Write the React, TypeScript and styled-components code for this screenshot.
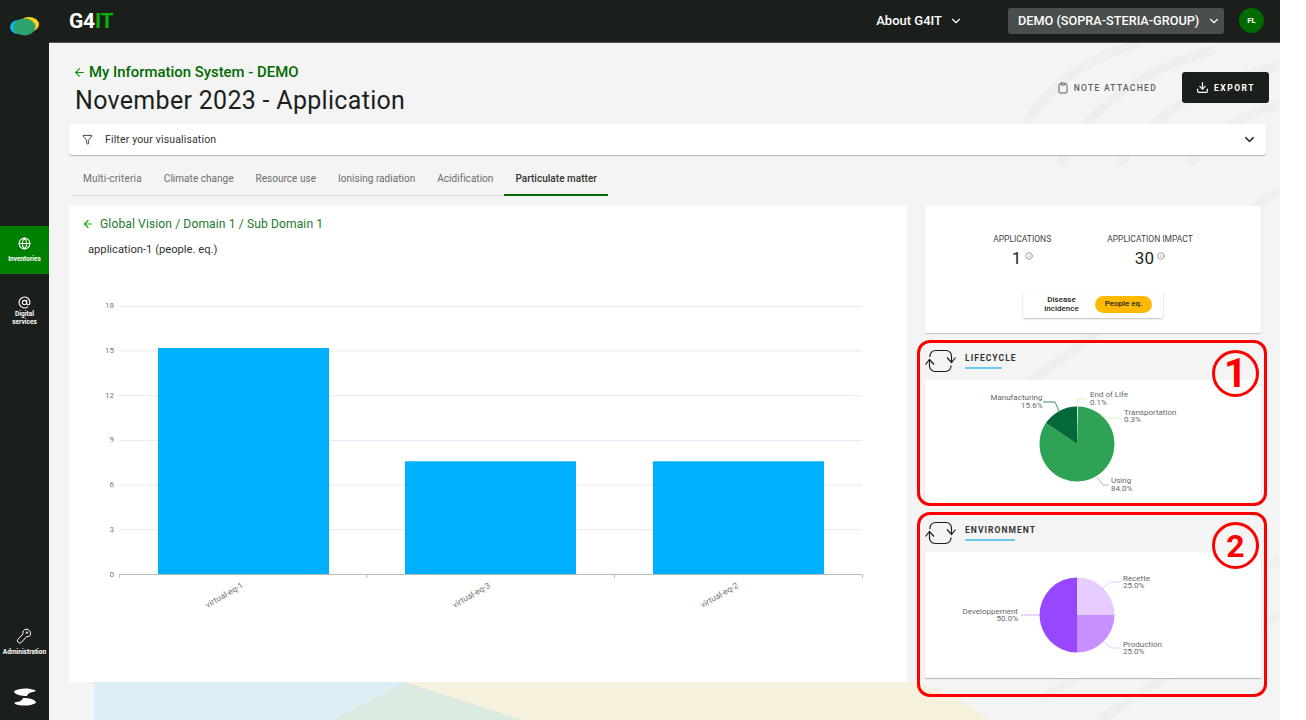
import React from "react";
import styled, { createGlobalStyle } from "styled-components";
import { ArrowLeft, AtSign, ChevronDown, Clipboard, Download, Filter, Globe, Info } from "lucide-react";

const FONT = `Roboto, "Liberation Sans", sans-serif`;

const GlobalStyle = createGlobalStyle`
  html, body {
    margin: 0;
    padding: 0;
    background: #ffffff;
    overflow: hidden;
  }
  * {
    box-sizing: border-box;
  }
  body {
    font-family: ${FONT};
  }
`;

const Screen = styled.div`
  display: flex;
  width: 1280px;
  height: 720px;
  background: #1b1f1c;
  overflow: hidden;
`;

const Sidebar = styled.nav`
  display: flex;
  flex-direction: column;
  flex: 0 0 49px;
  color: #ffffff;
`;

const SideLogo = styled.div`
  display: flex;
  align-items: center;
  justify-content: center;
  height: 52px;
  margin-bottom: 174px;
`;

const SideItem = styled.div<{ $active?: boolean }>`
  display: flex;
  flex-direction: column;
  align-items: center;
  justify-content: center;
  gap: ${(p) => (p.$active ? "5px" : "1px")};
  height: 48px;
  margin-top: ${(p) => (p.$active ? "0" : "13px")};
  background: ${(p) => (p.$active ? "#008000" : "transparent")};
  font-size: 6.5px;
  line-height: 8px;
  font-weight: 700;
  text-align: center;
`;

const SideBottom = styled.div`
  display: flex;
  flex-direction: column;
  align-items: center;
  gap: 32px;
  margin-top: auto;
  padding-bottom: 14px;
`;

const SideTool = styled.div`
  display: flex;
  flex-direction: column;
  align-items: center;
  gap: 4px;
  font-size: 6.5px;
  font-weight: 700;
`;

const Main = styled.div`
  display: flex;
  flex-direction: column;
  flex: 1;
  min-width: 0;
`;

const TopBar = styled.header`
  display: flex;
  align-items: center;
  flex: 0 0 43px;
  padding: 0 16px 1px 20px;
  color: #ffffff;
  border-bottom: 1px solid #555;
`;

const Brand = styled.div`
  font-size: 21px;
  font-weight: 700;
  letter-spacing: -0.2px;
  margin-right: auto;

  span {
    color: #0bb00b;
  }
`;

const AboutMenu = styled.div`
  display: flex;
  align-items: center;
  gap: 7px;
  font-size: 13px;
  font-weight: 500;
  margin-right: 45px;
`;

const OrgSelect = styled.div`
  display: flex;
  align-items: center;
  justify-content: space-between;
  width: 216px;
  height: 26px;
  padding: 0 3px 0 10px;
  background: #4a4e4c;
  border-radius: 3px;
  font-size: 12.7px;
  font-weight: 500;
  margin-right: 15px;
  white-space: nowrap;

  svg {
    flex-shrink: 0;
  }
`;

const Avatar = styled.div`
  display: flex;
  align-items: center;
  justify-content: center;
  width: 25px;
  height: 25px;
  border-radius: 50%;
  background: #006b00;
  font-size: 8px;
  font-weight: 700;
`;

const Content = styled.main`
  position: relative;
  flex: 1;
  padding: 20px 11px 0 20px;
  background: #f4f4f4;
  overflow: hidden;
`;

const Backdrop = styled.svg`
  position: absolute;
  top: 0;
  left: 0;
`;

const Layer = styled.div`
  position: relative;
`;

const TitleRow = styled.div`
  display: flex;
  justify-content: space-between;
  height: 61px;
`;

const BackLink = styled.div`
  display: flex;
  align-items: center;
  gap: 3px;
  height: 18px;
  padding-left: 4px;
  color: #006b00;
  font-size: 14.9px;
  font-weight: 500;

  svg {
    color: #0a8f0a;
  }
`;

const PageTitle = styled.h1`
  margin: 6px 0 0 6px;
  color: #1b1f1c;
  font-size: 25px;
  line-height: 28px;
  font-weight: 400;
  letter-spacing: 0.3px;
`;

const Actions = styled.div`
  display: flex;
  align-items: center;
  height: 31px;
  margin-top: 9px;
`;

const NoteLink = styled.div`
  display: flex;
  align-items: center;
  gap: 5px;
  margin-right: 25px;
  color: #5c5f5d;
  font-size: 8.5px;
  font-weight: 500;
  letter-spacing: 1.3px;
`;

const ExportButton = styled.button`
  display: flex;
  align-items: center;
  justify-content: center;
  gap: 5px;
  width: 87px;
  height: 31px;
  border: 0;
  border-radius: 3px;
  background: #1b1f1c;
  color: #ffffff;
  font-family: ${FONT};
  font-size: 8.5px;
  font-weight: 700;
  letter-spacing: 1.5px;
`;

const FilterBar = styled.div`
  display: flex;
  align-items: center;
  height: 31px;
  margin-right: 3px;
  padding: 0 9px 1px 13px;
  background: #ffffff;
  border-radius: 3px;
  box-shadow: 0 1px 1px 0 #b5b5b5;
  color: #333;
  font-size: 10.5px;

  span {
    margin: 0 auto 0 12px;
    letter-spacing: 0.15px;
  }
`;

const Tabs = styled.div`
  display: flex;
  width: 533px;
  height: 36px;
  margin: 5px 0 10px 3px;
  border-bottom: 1px solid #ddd;
`;

const Tab = styled.div<{ $active?: boolean }>`
  display: flex;
  align-items: center;
  justify-content: center;
  padding: 2px 11px 0;
  margin-bottom: ${(p) => (p.$active ? "-1px" : "0")};
  border-bottom: ${(p) => (p.$active ? "2px solid #006b00" : "0")};
  color: ${(p) => (p.$active ? "#333" : "#6b6e6c")};
  font-size: 10px;
  letter-spacing: 0.03px;
  font-weight: ${(p) => (p.$active ? 500 : 400)};
  white-space: nowrap;

  &:first-child {
    letter-spacing: 0.2px;
  }
`;

const Dashboard = styled.div`
  display: flex;
  gap: 18px;
`;

const ChartCard = styled.section`
  display: flex;
  flex-direction: column;
  flex: 0 0 838px;
  height: 476px;
  background: #ffffff;
`;

const Crumb = styled.div`
  display: flex;
  align-items: center;
  gap: 6px;
  height: 16px;
  margin: 10px 0 0 13px;
  color: #217a2e;
  font-size: 12.1px;
  letter-spacing: 0.1px;

  svg {
    color: #0cb40c;
  }
`;

const ChartTitle = styled.div`
  height: 16px;
  margin: 10px 0 12px 19px;
  color: #333;
  font-size: 11.2px;
  line-height: 16px;
`;

const SideColumn = styled.div`
  display: flex;
  flex-direction: column;
  flex: 0 0 336px;
`;

const StatCard = styled.section`
  display: flex;
  flex-direction: column;
  align-items: center;
  height: 127px;
  padding-top: 27px;
  background: #ffffff;
  border-radius: 2px;
  box-shadow: 0 1px 1px #c4c4c4;
`;

const Stats = styled.div`
  display: flex;
  justify-content: center;
  gap: 56px;
  width: 100%;
`;

const Stat = styled.div`
  display: flex;
  flex-direction: column;
  align-items: center;
  color: #444;
  font-size: 8.5px;
  line-height: 12px;
`;

const StatValue = styled.div`
  display: flex;
  align-items: flex-start;
  gap: 3px;
  margin-top: 6px;
  color: #222;
  font-size: 17px;
  line-height: 15px;
  letter-spacing: 0.3px;

  svg {
    color: #777;
    margin-top: 1px;
  }
`;

const UnitToggle = styled.div`
  display: flex;
  align-items: center;
  gap: 10px;
  width: 140px;
  height: 28px;
  margin-top: 24px;
  padding: 0 11px 0 15px;
  background: #ffffff;
  border-radius: 2px;
  box-shadow: 0 1px 2px #bdbdbd;
  color: #222;
  font-size: 8px;
  line-height: 9.5px;
  font-weight: 500;
  text-align: center;
`;

const UnitName = styled.div`
  flex: 0 0 47px;
`;

const UnitPill = styled.div`
  display: flex;
  align-items: center;
  justify-content: center;
  flex: 1;
  height: 17px;
  border-radius: 9px;
  background: #ffb900;
`;

const Callout = styled.section<{ $top: number }>`
  position: relative;
  margin-top: ${(p) => p.$top}px;
`;

const CalloutFrame = styled.div<{ $bottom: number }>`
  position: absolute;
  top: -6px;
  left: -8px;
  right: -6px;
  bottom: ${(p) => p.$bottom}px;
  border: 3px solid #ff0000;
  border-radius: 13px;
  pointer-events: none;
`;

const CalloutNumber = styled.div<{ $size: number }>`
  position: absolute;
  top: 4px;
  right: 2px;
  display: flex;
  align-items: center;
  justify-content: center;
  width: 47px;
  height: 47px;
  border: 3px solid #ff0000;
  border-radius: 50%;
  color: #ff0000;
  font-size: ${(p) => p.$size}px;
  line-height: 1;
  font-weight: 700;
`;

const SectionHead = styled.div`
  display: flex;
  align-items: flex-start;
  gap: 9px;
  height: 34px;
  padding: 3px 0 0;
`;

const SectionTitle = styled.div<{ $rule: number }>`
  margin-top: 5px;
  color: #333;
  font-size: 8.5px;
  line-height: 9px;
  font-weight: 700;
  letter-spacing: 1.05px;

  &::after {
    content: "";
    display: block;
    width: ${(p) => p.$rule}px;
    height: 2px;
    margin-top: 4px;
    background: #6cc9ef;
  }
`;

const PieCard = styled.div<{ $height: number }>`
  height: ${(p) => p.$height}px;
  background: #ffffff;
  border-radius: 2px;
  box-shadow: 0 1px 1px #b5b5b5;

  svg {
    display: block;
  }
`;

const ChartText = styled.text<{ $size: number }>`
  font-family: ${FONT};
  font-size: ${(p) => p.$size}px;
  fill: #777;
`;

const PieText = styled.text`
  font-family: ${FONT};
  font-size: 8px;
  fill: #666;
`;

const yTicks = [0, 3, 6, 9, 12, 15, 18];
const bars = [
  { label: "virtual-eq-1", x: 158, value: 15.2, tx: 244, ty: 587 },
  { label: "virtual-eq-3", x: 405, value: 7.6, tx: 491, ty: 587 },
  { label: "virtual-eq-2", x: 653, value: 7.6, tx: 739, ty: 587 },
];

function BarChart() {
  const y = (v: number) => 574.5 - v * 14.9;
  return (
    <svg width={838} height={412} viewBox="69 270 838 412">
      {yTicks.slice(1).map((t) => (
        <line key={t} x1={119} x2={862} y1={y(t)} y2={y(t)} stroke="#e6e9f2" />
      ))}
      {yTicks.map((t) => (
        <ChartText key={t} $size={8} x={114} y={y(t) + 2} textAnchor="end">
          {t}
        </ChartText>
      ))}
      {bars.map((b) => (
        <rect key={b.x} x={b.x} y={y(b.value)} width={171} height={b.value * 14.9} fill="#00b0ff" />
      ))}
      <path d="M119.5 578V574.5H862.5V578M367 574.5V578M614.5 574.5V578" fill="none" stroke="#bbb" />
      {bars.map((b) => (
        <ChartText key={b.label} $size={8.5} x={b.tx} y={b.ty} textAnchor="end" transform={`rotate(-30 ${b.tx} ${b.ty})`}>
          {b.label}
        </ChartText>
      ))}
    </svg>
  );
}

type Slice = { from: number; to: number; color: string };

// fractions run clockwise from the top of the pie
function slicePath(cx: number, cy: number, r: number, from: number, to: number) {
  const pt = (f: number) => {
    const a = f * 2 * Math.PI;
    return `${cx + r * Math.sin(a)} ${cy - r * Math.cos(a)}`;
  };
  return `M${cx} ${cy}L${pt(from)}A${r} ${r} 0 ${to - from > 0.5 ? 1 : 0} 1 ${pt(to)}Z`;
}

function Pie({ cy, slices }: { cy: number; slices: Slice[] }) {
  return (
    <>
      {slices.map((s) => (
        <path key={s.color} d={slicePath(1077, cy, 37.5, s.from, s.to)} fill={s.color} />
      ))}
    </>
  );
}

function LifecyclePie() {
  return (
    <svg width={336} height={124} viewBox="925 379 336 124">
      <path d="M1043 401H1055L1059 410" fill="none" stroke="#3c8d68" />
      <path d="M1077 406V398H1087" fill="none" stroke="#f3eeb0" />
      <path d="M1082 407L1100 413L1108 417H1121" fill="none" stroke="#d5efc4" />
      <path d="M1097 476L1103 484H1109" fill="none" stroke="#8fd0a5" />
      <Pie
        cy={443}
        slices={[
          { from: 0.004, to: 0.844, color: "#2ea355" },
          { from: 0.844, to: 1, color: "#04693a" },
        ]}
      />
      <PieText x={1042.5} y={399} textAnchor="end">Manufacturing</PieText>
      <PieText x={1042.5} y={407} textAnchor="end">15.6%</PieText>
      <PieText x={1090} y={396}>End of Life</PieText>
      <PieText x={1090} y={404}>0.1%</PieText>
      <PieText x={1124} y={414}>Transportation</PieText>
      <PieText x={1124} y={421}>0.3%</PieText>
      <PieText x={1111} y={482}>Using</PieText>
      <PieText x={1111} y={490}>84.0%</PieText>
    </svg>
  );
}

function EnvironmentPie() {
  return (
    <svg width={336} height={126} viewBox="925 552 336 126">
      <path d="M1103 588L1110 582H1121" fill="none" stroke="#e6ccff" />
      <path d="M1104 642L1111 648H1121" fill="none" stroke="#e6ccff" />
      <path d="M1021 615H1040" fill="none" stroke="#d2a8ff" />
      <Pie
        cy={615}
        slices={[
          { from: 0, to: 0.25, color: "#e6ccff" },
          { from: 0.25, to: 0.5, color: "#c78fff" },
          { from: 0.5, to: 1, color: "#9747ff" },
        ]}
      />
      <PieText x={1123} y={581}>Recette</PieText>
      <PieText x={1123} y={588}>25.0%</PieText>
      <PieText x={1123} y={647}>Production</PieText>
      <PieText x={1123} y={654}>25.0%</PieText>
      <PieText x={1018} y={614} textAnchor="end">Developpement</PieText>
      <PieText x={1018} y={621} textAnchor="end">50.0%</PieText>
    </svg>
  );
}

function CycleIcon() {
  return (
    <svg width={31} height={24} viewBox="0 0 31 24" fill="none" stroke="#1b1f1c" strokeWidth={1.2}>
      <path d="M5 8V7A5.5 5.5 0 0 1 10.5 1.5H21A5.5 5.5 0 0 1 26.5 7V13" />
      <path d="M22 8.5L26.5 13.5L30.5 8.5" />
      <path d="M26 16.5V17A5.5 5.5 0 0 1 20.5 22.5H10A5.5 5.5 0 0 1 4.5 17V11" />
      <path d="M0.5 15.5L4.5 10.5L9 15.5" />
    </svg>
  );
}

function BrandLogo() {
  return (
    <svg width={29} height={20} viewBox="0 0 29 20">
      <ellipse cx={19} cy={8.5} rx={10} ry={7.5} fill="#ffd21b" />
      <ellipse cx={8.5} cy={11} rx={8.5} ry={7} fill="#12b5ea" />
      <ellipse cx={14.5} cy={11} rx={11} ry={8.5} fill="#2ea36b" />
    </svg>
  );
}

function AdminIcon() {
  return (
    <svg width={16} height={16} viewBox="0 0 16 16" fill="none" stroke="#ffffff" strokeWidth={1}>
      <path d="M10 1.2A4.4 4.4 0 0 1 14.6 6.2C14.2 8 12.4 9 10.6 8.6L5.6 14.2A2.3 2.3 0 0 1 2 11.2L7 6C6.4 3.6 7.8 1.6 10 1.2Z" />
      <circle cx={11} cy={4.6} r={0.8} />
    </svg>
  );
}

function SopraLogo() {
  return (
    <svg width={24} height={18} viewBox="0 0 24 18" fill="#ffffff">
      <path d="M1 3C6 0 15 -0.5 22 2C23 3 22 4 20 4C16 4.5 15 6 14 8C9 8 1 7 1 3Z" />
      <path d="M23 15C18 18 9 18.5 2 16C1 15 2 14 4 14C8 13.5 9 12 10 10C15 10 23 11 23 15Z" />
    </svg>
  );
}

function PageBackdrop() {
  return (
    <Backdrop width={1231} height={677} viewBox="49 43 1231 677">
      <g fill="none" stroke="#efefef" strokeWidth={9}>
        <path d="M1010 150C1040 90 1080 60 1140 43" />
        <path d="M1060 165C1090 105 1140 70 1215 50" />
        <path d="M1120 165C1150 115 1200 85 1280 65" />
        <path d="M1190 165C1210 135 1240 115 1280 105" />
        <path d="M1000 400C1100 340 1190 250 1280 190" />
        <path d="M1040 700C1130 640 1210 590 1280 560" />
        <path d="M1100 720C1160 680 1220 640 1280 615" />
      </g>
      <path d="M94 682H410L340 720H94Z" fill="#ddeff6" />
      <path d="M405 682H915C945 690 965 702 990 720H522Z" fill="#f6f1dc" />
      <path d="M405 682L522 720H330Z" fill="#dcebe2" />
    </Backdrop>
  );
}

const tabs = ["Multi-criteria", "Climate change", "Resource use", "Ionising radiation", "Acidification", "Particulate matter"];

export default function App() {
  return (
    <>
      <GlobalStyle />
      <Screen>
        <Sidebar>
          <SideLogo>
            <BrandLogo />
          </SideLogo>
          <SideItem $active>
            <Globe size={13} />
            Inventories
          </SideItem>
          <SideItem>
            <AtSign size={13} />
            <div>
              Digital
              <br />
              services
            </div>
          </SideItem>
          <SideBottom>
            <SideTool>
              <AdminIcon />
              Administration
            </SideTool>
            <SopraLogo />
          </SideBottom>
        </Sidebar>
        <Main>
          <TopBar>
            <Brand>
              G4<span>IT</span>
            </Brand>
            <AboutMenu>
              About G4IT <ChevronDown size={14} />
            </AboutMenu>
            <OrgSelect>
              DEMO (SOPRA-STERIA-GROUP) <ChevronDown size={14} />
            </OrgSelect>
            <Avatar>FL</Avatar>
          </TopBar>
          <Content>
            <PageBackdrop />
            <Layer>
              <TitleRow>
                <div>
                  <BackLink>
                    <ArrowLeft size={13} />
                    My Information System - DEMO
                  </BackLink>
                  <PageTitle>November 2023 - Application</PageTitle>
                </div>
                <Actions>
                  <NoteLink>
                    <Clipboard size={12} />
                    NOTE ATTACHED
                  </NoteLink>
                  <ExportButton>
                    <Download size={13} strokeWidth={2.2} />
                    EXPORT
                  </ExportButton>
                </Actions>
              </TitleRow>
              <FilterBar>
                <Filter size={11} />
                <span>Filter your visualisation</span>
                <ChevronDown size={15} strokeWidth={2.4} />
              </FilterBar>
              <Tabs>
                {tabs.map((t, i) => (
                  <Tab key={t} $active={i === tabs.length - 1}>
                    {t}
                  </Tab>
                ))}
              </Tabs>
              <Dashboard>
                <ChartCard>
                  <Crumb>
                    <ArrowLeft size={12} strokeWidth={2.4} />
                    Global Vision / Domain 1 / Sub Domain 1
                  </Crumb>
                  <ChartTitle>application-1 (people. eq.)</ChartTitle>
                  <BarChart />
                </ChartCard>
                <SideColumn>
                  <StatCard>
                    <Stats>
                      <Stat>
                        APPLICATIONS
                        <StatValue>
                          1 <Info size={8} />
                        </StatValue>
                      </Stat>
                      <Stat>
                        APPLICATION IMPACT
                        <StatValue>
                          30 <Info size={8} />
                        </StatValue>
                      </Stat>
                    </Stats>
                    <UnitToggle>
                      <UnitName>
                        Disease
                        <br />
                        incidence
                      </UnitName>
                      <UnitPill>People eq.</UnitPill>
                    </UnitToggle>
                  </StatCard>
                  <Callout $top={13}>
                    <CalloutFrame $bottom={-2} />
                    <CalloutNumber $size={40}>1</CalloutNumber>
                    <SectionHead>
                      <CycleIcon />
                      <SectionTitle $rule={37}>LIFECYCLE</SectionTitle>
                    </SectionHead>
                    <PieCard $height={124}>
                      <LifecyclePie />
                    </PieCard>
                  </Callout>
                  <Callout $top={14}>
                    <CalloutFrame $bottom={-19} />
                    <CalloutNumber $size={32}>2</CalloutNumber>
                    <SectionHead>
                      <CycleIcon />
                      <SectionTitle $rule={50}>ENVIRONMENT</SectionTitle>
                    </SectionHead>
                    <PieCard $height={126}>
                      <EnvironmentPie />
                    </PieCard>
                  </Callout>
                </SideColumn>
              </Dashboard>
            </Layer>
          </Content>
        </Main>
      </Screen>
    </>
  );
}
